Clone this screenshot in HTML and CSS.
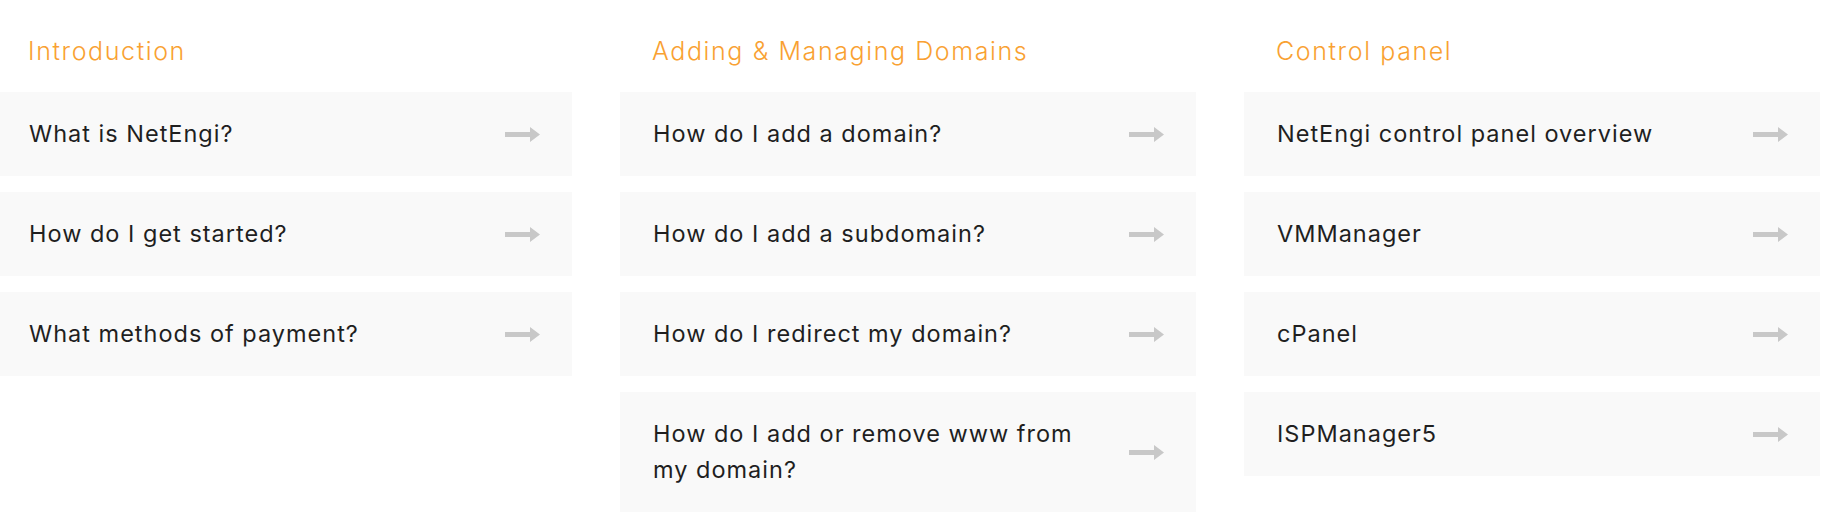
FILE: index.html
```html
<!DOCTYPE html>
<html>
    <head>
        <title>Help Center</title>
        <meta name="viewport" content="width=device-width">
        <link rel="stylesheet" href="styles.css">
    </head>
    <body>
        <main class="topics">
            <section class="topic">
                <h2 class="topic-title">Introduction</h2>
                <ul class="questions">
                    <li><a class="question" href="#"><span>What is NetEngi?</span><svg class="arrow" viewBox="0 0 35 15"><path d="M0 5h25V0l10 7.5L25 15v-5H0z"/></svg></a></li>
                    <li><a class="question" href="#"><span>How do I get started?</span><svg class="arrow" viewBox="0 0 35 15"><path d="M0 5h25V0l10 7.5L25 15v-5H0z"/></svg></a></li>
                    <li><a class="question" href="#"><span>What methods of payment?</span><svg class="arrow" viewBox="0 0 35 15"><path d="M0 5h25V0l10 7.5L25 15v-5H0z"/></svg></a></li>
                </ul>
            </section>

            <section class="topic">
                <h2 class="topic-title">Adding &amp; Managing Domains</h2>
                <ul class="questions">
                    <li><a class="question" href="#"><span>How do I add a domain?</span><svg class="arrow" viewBox="0 0 35 15"><path d="M0 5h25V0l10 7.5L25 15v-5H0z"/></svg></a></li>
                    <li><a class="question" href="#"><span>How do I add a subdomain?</span><svg class="arrow" viewBox="0 0 35 15"><path d="M0 5h25V0l10 7.5L25 15v-5H0z"/></svg></a></li>
                    <li><a class="question" href="#"><span>How do I redirect my domain?</span><svg class="arrow" viewBox="0 0 35 15"><path d="M0 5h25V0l10 7.5L25 15v-5H0z"/></svg></a></li>
                    <li><a class="question" href="#"><span>How do I add or remove www from my domain?</span><svg class="arrow" viewBox="0 0 35 15"><path d="M0 5h25V0l10 7.5L25 15v-5H0z"/></svg></a></li>
                </ul>
            </section>

            <section class="topic">
                <h2 class="topic-title">Control panel</h2>
                <ul class="questions">
                    <li><a class="question" href="#"><span>NetEngi control panel overview</span><svg class="arrow" viewBox="0 0 35 15"><path d="M0 5h25V0l10 7.5L25 15v-5H0z"/></svg></a></li>
                    <li><a class="question" href="#"><span>VMManager</span><svg class="arrow" viewBox="0 0 35 15"><path d="M0 5h25V0l10 7.5L25 15v-5H0z"/></svg></a></li>
                    <li><a class="question" href="#"><span>cPanel</span><svg class="arrow" viewBox="0 0 35 15"><path d="M0 5h25V0l10 7.5L25 15v-5H0z"/></svg></a></li>
                    <li><a class="question" href="#"><span>ISPManager5</span><svg class="arrow" viewBox="0 0 35 15"><path d="M0 5h25V0l10 7.5L25 15v-5H0z"/></svg></a></li>
                </ul>
            </section>
        </main>
    </body>
</html>
```

FILE: styles.css
```css
body {
    margin: 0;
    background: #fff;
    color: #1f1f1f;
    font-family: Inter, "Open Sans", sans-serif;
}

.topics {
    display: grid;
    grid-template-columns: repeat(3, 576px);
    column-gap: 48px;
    align-items: start;
    margin-left: -4px;
}

.topic-title {
    margin: 33px 0 23px;
    padding-left: 32px;
    color: #f9a132;
    font-size: 25px;
    font-weight: 300;
    letter-spacing: 1.6px;
    line-height: 36px;
}

.questions {
    list-style: none;
    margin: 0;
    padding: 0;
}

.questions > li {
    margin-bottom: 16px;
}

.question {
    display: flex;
    align-items: center;
    justify-content: space-between;
    gap: 30px;
    padding: 24px 32px 24px 33px;
    background-color: #f9f9f9;
    color: inherit;
    font-size: 23.5px;
    font-weight: 400;
    letter-spacing: 1px;
    line-height: 36px;
    text-decoration: none;
}

.question > span {
    flex: 1;
}

.arrow {
    flex: none;
    width: 35px;
    height: 15px;
    fill: #c8c8c8;
}
```
